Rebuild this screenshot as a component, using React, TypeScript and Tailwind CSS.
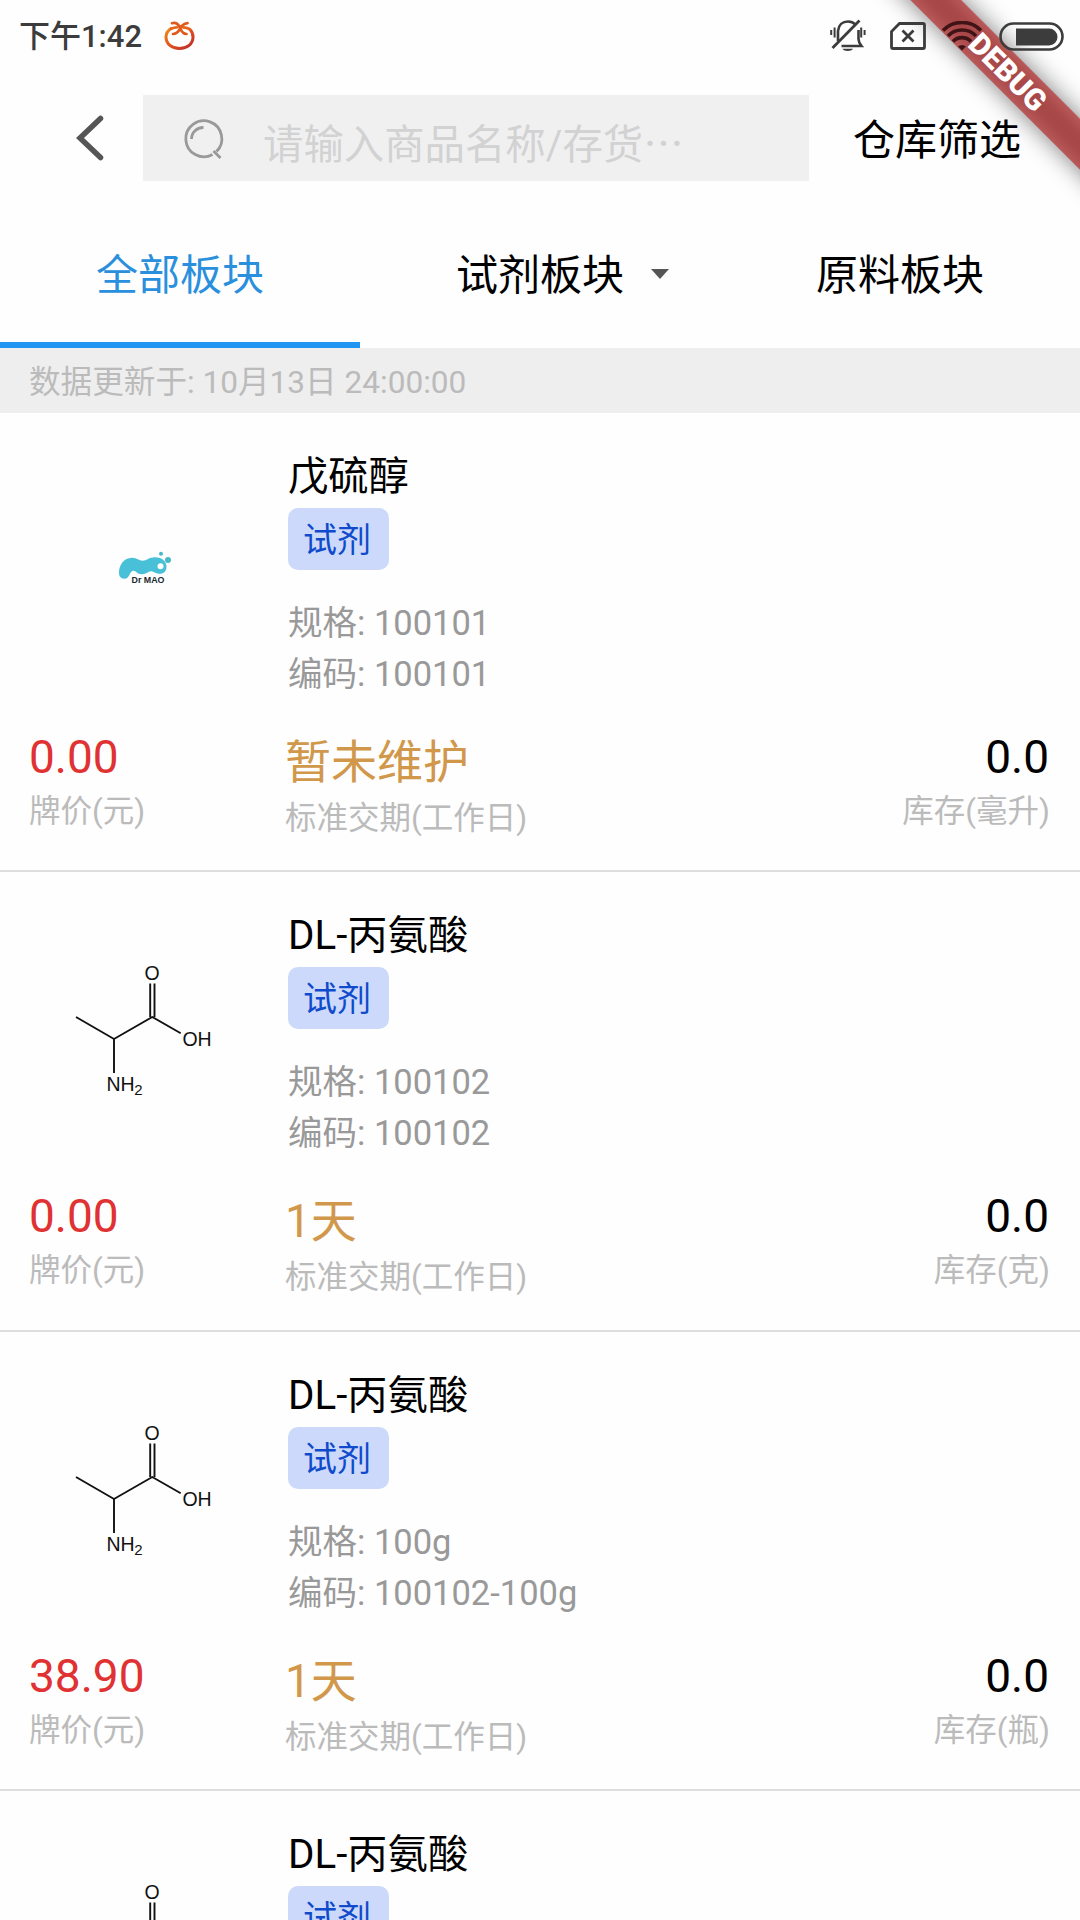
import React from 'react';

interface Product {
    id: string;
    name: string;
    tag: string;
    image: 'logo' | 'alanine';
    detail?: {
        spec: string;
        code: string;
        price: string;
        delivery: string;
        stock: string;
        unit: string;
    };
}

const products: Product[] = [
    { id: '1', name: '戊硫醇', tag: '试剂', image: 'logo', detail: { spec: '100101', code: '100101', price: '0.00', delivery: '暂未维护', stock: '0.0', unit: '毫升' } },
    { id: '2', name: 'DL-丙氨酸', tag: '试剂', image: 'alanine', detail: { spec: '100102', code: '100102', price: '0.00', delivery: '1天', stock: '0.0', unit: '克' } },
    { id: '3', name: 'DL-丙氨酸', tag: '试剂', image: 'alanine', detail: { spec: '100g', code: '100102-100g', price: '38.90', delivery: '1天', stock: '0.0', unit: '瓶' } },
    { id: '4', name: 'DL-丙氨酸', tag: '试剂', image: 'alanine' },
];

const TomatoIcon = () => (
    <svg width="32" height="32" viewBox="0 0 32 32" fill="none" strokeLinecap="round" strokeWidth="3">
        <defs>
            <linearGradient id="tomato" x1="0" y1="0" x2="1" y2="1">
                <stop offset="0" stopColor="#f08a1d" />
                <stop offset="0.5" stopColor="#e2501c" />
                <stop offset="1" stopColor="#b92b2b" />
            </linearGradient>
        </defs>
        <path d="M7 8.500C4 10.500 2 13.500 2 17c0 7 6 11.500 13.500 11.500S29 24 29 17c0-3-1-5.500-3-7.500" stroke="url(#tomato)" />
        <path d="M8 3.200c4-1 6.500 1 8 4.800 1.500 3.500 3 6 6.500 6M23.500 3.200c-4 .5-6 2.500-7.500 5.500-1.500 3-3.500 5.300-7 5.300" stroke="#e2581c" strokeWidth="2.700" />
        <path d="M7 8.800c2-1 4-1.500 6-1.500M19 7.300c2.500 0 4.500.5 6.500 1.700" stroke="#e8661c" strokeWidth="2.700" />
    </svg>
);

const MuteIcon = () => (
    <svg width="36" height="34" viewBox="0 0 36 34" fill="none" stroke="#3c3c3c" strokeWidth="2.600">
        <path d="M8 22V12C8.500 6 12.500 2.500 18 2.500c3 0 5.500 1 7.500 3M28.500 11v9c0 3 1 4.500 3 7H11.500" />
        <path d="M2.500 29L29.500 1.500" strokeWidth="2.800" />
        <path d="M1.200 11v5M4.600 8.500v10M31.200 8.500v10M34.600 11v5" strokeWidth="2" />
        <path d="M12.500 29.800h10.500c-1.500 3-9 3-10.500 0z" fill="#3c3c3c" stroke="none" />
    </svg>
);

const NoSimIcon = () => (
    <svg width="36" height="28" viewBox="0 0 36 28" fill="none" stroke="#3c3c3c" strokeWidth="2.800">
        <path d="M9.500 1.500H33Q34.500 1.500 34.500 3v22Q34.500 26.500 33 26.500H3Q1.500 26.500 1.500 25V9.500z" />
        <path d="M12.500 8.500l11 11M23.500 8.500l-11 11" />
    </svg>
);

const WifiIcon = () => (
    <svg width="42" height="30" viewBox="0 0 42 30" fill="none" stroke="#401417" strokeWidth="3.600">
        <path d="M2 9.500a26.500 26.500 0 0 1 38 0" />
        <path d="M7 15a19.500 19.500 0 0 1 28 0" />
        <path d="M12 20.500a12.500 12.500 0 0 1 18 0" />
        <path d="M17 25.500a6 6 0 0 1 8 0L21 29.500z" fill="#401417" stroke="none" />
    </svg>
);

const BatteryIcon = () => (
    <svg width="65" height="29" viewBox="0 0 65 29" fill="none">
        <rect x="1.500" y="1.500" width="62" height="26" rx="13" stroke="#3c3c3c" strokeWidth="2.600" />
        <path d="M17 6.500h33a8.500 8.500 0 0 1 0 17H17z" fill="#3c3c3c" />
    </svg>
);

// The ribbon sits under the status icons, its label above them
const DebugBanner = () => (
    <>
        <svg className="pointer-events-none absolute top-0 right-0" width="240" height="240" viewBox="0 0 240 240">
            <defs>
                <filter id="bannerShadow" x="-20%" y="-150%" width="140%" height="400%">
                    <feGaussianBlur stdDeviation="12" />
                </filter>
            </defs>
            <g transform="translate(240 0) rotate(45)">
                <rect x="-160" y="84" width="320" height="36" fill="#000" fillOpacity="0.5" filter="url(#bannerShadow)" />
                <rect x="-160" y="84" width="320" height="36" fill="#b71c1c" fillOpacity="0.627" />
            </g>
        </svg>
        <svg className="pointer-events-none absolute top-0 right-0 z-20" width="240" height="240" viewBox="0 0 240 240">
            <text x="0" y="112.500" transform="translate(240 0) rotate(45)" textAnchor="middle" fill="#fff" fontSize="30" fontWeight="900" fontFamily="Roboto, sans-serif">DEBUG</text>
        </svg>
    </>
);

const BrandLogo = () => (
    <svg width="180" height="180" viewBox="0 0 180 180">
        <path d="M59 93C58.500 84 64 77 72 76.800c5 0 7 3 10.500 3 4 0 6.500-3.500 12.500-3.500 7 0 11.500 4 11.500 9.500 0 4.500-3 7-6.500 7-5 0-6-2.500-9-2.500s-4.500 3-9 3c-5 0-6-3.500-8.500-3.500-4 0-3.500 8-9 8-3 0-5.200-1.800-5.500-4.800z" fill="#48c0d8" />
        <circle cx="100.500" cy="85.300" r="3" fill="#fff" />
        <circle cx="101" cy="72.700" r="2" fill="#48b8c4" />
        <circle cx="108" cy="79" r="3" fill="#48b8c4" />
        <text x="71.500" y="101.500" textLength="33" lengthAdjust="spacingAndGlyphs" fontSize="8.800" fontWeight="700" fill="#1c2a30" fontFamily="Liberation Sans, sans-serif">Dr MAO</text>
    </svg>
);

const AlanineStructure = () => (
    <svg width="180" height="180" viewBox="0 0 180 180" fontFamily="Liberation Sans, sans-serif" fontSize="19.500" fill="#111">
        <path d="M16 77L54 99L92.300 77L120.700 93.300M54 99V133M90.200 77V43.500M94.500 77V43.500" fill="none" stroke="#111" strokeWidth="1.900" />
        <text x="92" y="40.300" textAnchor="middle">O</text>
        <text x="122.500" y="106.300" textLength="29">OH</text>
        <text x="46.500" y="150.700" textLength="28">NH</text>
        <text x="74.300" y="155" fontSize="15">2</text>
    </svg>
);

const StatusBar = () => (
    <div className="relative z-10 flex h-[72px] shrink-0 items-center justify-between pr-[16px] pl-[19px]">
        <div className="flex items-center gap-[22px]">
            <span className="pt-[2px] text-[31px] leading-[40px] font-medium text-[#3c3c3c]">下午1:42</span>
            <TomatoIcon />
        </div>
        <div className="flex items-center">
            <div className="mr-[24px]"><MuteIcon /></div>
            <div className="mr-[15px]"><NoSimIcon /></div>
            <div className="mr-[16px]"><WifiIcon /></div>
            <BatteryIcon />
        </div>
    </div>
);

const SearchHeader = () => (
    <div className="flex h-[132px] shrink-0 items-center">
        <button className="flex w-[143px] justify-end pr-[38px]">
            <svg width="30" height="48" viewBox="0 0 30 48" fill="none" stroke="#555" strokeWidth="5.500" strokeLinecap="round">
                <path d="M25.500 4.500L5 24l20.500 19.500" />
            </svg>
        </button>
        <div className="flex h-[86px] w-[666px] items-center bg-[#f0f0f1] pl-[38px]">
            <svg width="46" height="46" viewBox="0 0 46 46" fill="none" stroke="#999" strokeWidth="2.800">
                <path d="M31.500 39.500A18 18 0 1 1 35.500 36.500" />
                <path d="M32.500 36l7 7M10.500 24a11.500 11.500 0 0 1 12-11.500" />
            </svg>
            <span className="ml-[36px] pt-[11px] text-[40.400px] leading-[60px] text-[#d2d2d2]">
                请输入商品名称/存货<span className="font-['Noto_Sans_CJK_SC']">…</span>
            </span>
        </div>
        <span className="ml-[44px] pt-[6px] text-[42px] leading-[60px] text-black">仓库筛选</span>
    </div>
);

const Tabs = () => (
    <div className="grid h-[144px] shrink-0 grid-cols-3 text-[42px] leading-[144px] text-black">
        <div className="h-[144px] border-b-[6px] border-[#2196f3] text-center text-[#2a8fdc]">全部板块</div>
        <div className="text-center">
            <span className="relative">
                试剂板块
                <svg className="absolute top-1/2 left-full mt-[-2px] ml-[27px] -translate-y-1/2" width="18" height="10" viewBox="0 0 18 10">
                    <path d="M0 0h18L9 10z" fill="#555" />
                </svg>
            </span>
        </div>
        <div className="text-center">原料板块</div>
    </div>
);

const ProductRow: React.FC<{ product: Product }> = ({ product }) => {
    const { name, tag, image, detail } = product;

    return (
        <div className="h-[459.300px] shrink-0 border-b-2 border-[#dedede]">
            <div className="flex h-[311px]">
                <div className="w-[288px] shrink-0 pt-[68px] pl-[60px]">
                    {image === 'logo' ? <BrandLogo /> : <AlanineStructure />}
                </div>
                <div className="flex flex-col items-start pt-[35px]">
                    <h3 className="h-[60px] text-[40.300px] leading-[58px] text-black">{name}</h3>
                    <span className="h-[62px] rounded-[10px] bg-[#ccd9fb] pr-[18px] pl-[15px] text-[34px] leading-[64px] text-[#0f4bcb]">{tag}</span>
                    {detail && (
                        <div className="mt-[28px] text-[34.500px] leading-[51px] text-[#999]">
                            <p>规格: {detail.spec}</p>
                            <p>编码: {detail.code}</p>
                        </div>
                    )}
                </div>
            </div>
            {detail && (
                <div className="flex pr-[30px] pl-[29px] text-[31.500px] text-[#bbb]">
                    <div className="w-[256px]">
                        <p className="text-[46px] leading-[66px] text-[#e03232]">{detail.price}</p>
                        <p className="leading-[43px]">牌价(元)</p>
                    </div>
                    <div className="pt-[5px]">
                        <p className="text-[46px] leading-[66px] text-[#d1974a]">{detail.delivery}</p>
                        <p className="leading-[48px]">标准交期(工作日)</p>
                    </div>
                    <div className="ml-auto text-right">
                        <p className="pr-px text-[46px] leading-[66px] text-black">{detail.stock}</p>
                        <p className="leading-[43px]">库存({detail.unit})</p>
                    </div>
                </div>
            )}
        </div>
    );
};

export default function App() {
    return (
        <div className="relative flex h-[1920px] w-[1080px] flex-col overflow-hidden bg-[#fefefe] font-[Roboto,'Noto_Sans_CJK_SC',sans-serif]">
            <StatusBar />
            <SearchHeader />
            <Tabs />
            <div className="h-[65px] shrink-0 bg-[#eee] pl-[29px] text-[31.600px] leading-[70px] text-[#bbb]">
                数据更新于: 10月13日 24:00:00
            </div>
            {products.map((product) => (
                <ProductRow key={product.id} product={product} />
            ))}
            <DebugBanner />
        </div>
    );
}
